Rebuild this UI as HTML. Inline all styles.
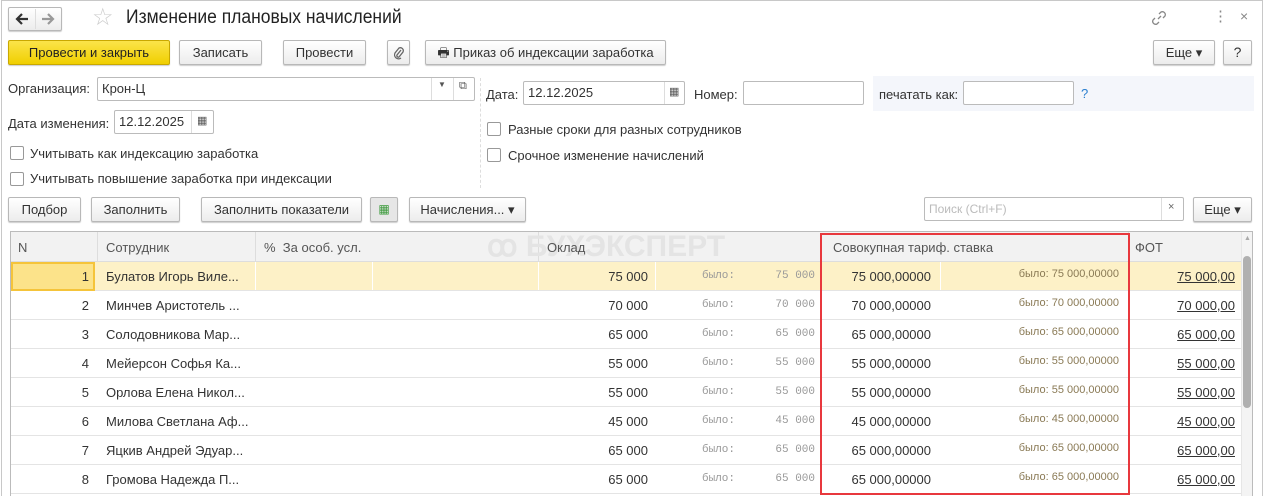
<!DOCTYPE html>
<html><head><meta charset="utf-8"><style>
*{box-sizing:border-box;margin:0;padding:0}
body{width:1266px;height:496px;background:#fff;font-family:"Liberation Sans",Arial,sans-serif;font-size:13px;color:#333;position:relative;overflow:hidden}
.a{position:absolute;white-space:nowrap}
.btn{position:absolute;height:25px;border:1px solid #b8b8b8;border-radius:2px;background:linear-gradient(#fff,#ececec);box-shadow:0 1px 1px rgba(0,0,0,.2);text-align:center;line-height:23px;color:#333;font-size:13px}
.inp{position:absolute;height:24px;border:1px solid #bbb;border-radius:2px;background:#fff;line-height:22px;padding-left:4px;color:#333}
.cb{position:absolute;width:14px;height:14px;border:1px solid #999;border-radius:2px;background:#fff}
.t{position:absolute;left:10px;top:231px;width:1243px;height:265px;border:1px solid #bbb;border-bottom:none;overflow:hidden}
.row{position:absolute;left:0;width:1230px;height:29px;border-bottom:1px solid #e4e4e4}
.c{position:absolute;top:0;height:28px;line-height:29px;white-space:nowrap}
.r{text-align:right}
.was{color:#999;font-size:11px}
.was2{color:#8a7a55;font-size:11px}
</style></head><body>
<div class="a" style="left:1px;top:0;width:1262px;height:496px;border-left:1px solid #c8c8c8;border-right:1px solid #c8c8c8;border-top:1px solid #c8c8c8"></div>
<!-- nav -->
<div class="btn" style="left:8px;top:7px;width:54px;height:24px"></div>
<div class="a" style="left:35px;top:9px;width:1px;height:20px;background:#ddd"></div>
<svg class="a" style="left:14px;top:11px" width="16" height="16" viewBox="0 0 16 16"><path d="M14 8H3M8 3L3 8l5 5" stroke="#333" stroke-width="2.2" fill="none"/></svg>
<svg class="a" style="left:40px;top:11px" width="16" height="16" viewBox="0 0 16 16"><path d="M2 8h11M8 3l5 5-5 5" stroke="#999" stroke-width="2.2" fill="none"/></svg>
<div class="a" style="left:92px;top:3px;font-size:24px;color:#ccc">☆</div>
<div class="a" style="left:126px;top:7px;font-size:19px;color:#222;transform:scaleX(.92);transform-origin:left">Изменение плановых начислений</div>
<svg class="a" style="left:1150px;top:9px" width="18" height="18" viewBox="0 0 18 18"><path d="M8 10l3-3M9 5l2-2a3 3 0 014 4l-2 2M9 13l-2 2a3 3 0 01-4-4l2-2" stroke="#888" stroke-width="1.3" fill="none"/></svg>
<div class="a" style="left:1213px;top:7px;font-size:15px;color:#888">⋮</div>
<div class="a" style="left:1240px;top:8px;font-size:14px;color:#888">×</div>
<!-- toolbar -->
<div class="btn" style="left:8px;top:40px;width:162px;background:linear-gradient(#fbe44a,#f0cf00);border-color:#c9a800;color:#222">Провести и закрыть</div>
<div class="btn" style="left:179px;top:40px;width:83px">Записать</div>
<div class="btn" style="left:283px;top:40px;width:83px">Провести</div>
<div class="btn" style="left:387px;top:40px;width:23px">
<svg width="12" height="14" viewBox="0 0 12 14" style="margin-top:5px"><path d="M8 4L4 9a1.5 1.5 0 002 2l4-5a3 3 0 00-4-4L2 7a4 4 0 006 5" stroke="#666" stroke-width="1.3" fill="none"/></svg></div>
<div class="btn" style="left:425px;top:40px;width:241px">🖶︎ Приказ об индексации заработка</div>
<div class="btn" style="left:1153px;top:40px;width:62px">Еще ▾</div>
<div class="btn" style="left:1223px;top:40px;width:29px;font-size:14px">?</div>
<!-- form left -->
<div class="a" style="left:8px;top:81px">Организация:</div>
<div class="inp" style="left:97px;top:77px;width:378px">Крон-Ц</div>
<div class="a" style="left:431px;top:78px;width:1px;height:22px;background:#ddd"></div>
<div class="a" style="left:438px;top:80px;font-size:8px;color:#555">▼</div>
<div class="a" style="left:453px;top:78px;width:1px;height:22px;background:#ddd"></div>
<div class="a" style="left:459px;top:80px;font-size:11px;color:#555">⧉</div>
<div class="a" style="left:8px;top:116px">Дата изменения:</div>
<div class="inp" style="left:114px;top:110px;width:100px">12.12.2025</div>
<div class="a" style="left:191px;top:111px;width:1px;height:22px;background:#ddd"></div>
<div class="a" style="left:197px;top:114px;font-size:11px;color:#555">▦</div>
<div class="cb" style="left:10px;top:146px"></div><div class="a" style="left:30px;top:146px">Учитывать как индексацию заработка</div>
<div class="cb" style="left:10px;top:172px"></div><div class="a" style="left:30px;top:171px">Учитывать повышение заработка при индексации</div>
<div class="a" style="left:480px;top:78px;height:110px;border-left:1px dashed #ddd"></div>
<!-- form right -->
<div class="a" style="left:486px;top:87px">Дата:</div>
<div class="inp" style="left:523px;top:81px;width:162px">12.12.2025</div>
<div class="a" style="left:664px;top:82px;width:1px;height:22px;background:#ddd"></div>
<div class="a" style="left:669px;top:85px;font-size:11px;color:#555">▦</div>
<div class="a" style="left:694px;top:87px">Номер:</div>
<div class="inp" style="left:743px;top:81px;width:121px"></div>
<div class="a" style="left:873px;top:76px;width:381px;height:35px;background:#f4f6fb"></div>
<div class="a" style="left:879px;top:87px">печатать как:</div>
<div class="inp" style="left:963px;top:81px;width:111px"></div>
<div class="a" style="left:1081px;top:86px;color:#2a7fd0">?</div>
<div class="cb" style="left:487px;top:122px"></div><div class="a" style="left:508px;top:122px">Разные сроки для разных сотрудников</div>
<div class="cb" style="left:487px;top:148px"></div><div class="a" style="left:508px;top:148px">Срочное изменение начислений</div>
<!-- table toolbar -->
<div class="btn" style="left:8px;top:197px;width:73px">Подбор</div>
<div class="btn" style="left:91px;top:197px;width:89px">Заполнить</div>
<div class="btn" style="left:201px;top:197px;width:161px">Заполнить показатели</div>
<div class="btn" style="left:370px;top:197px;width:28px;background:#e6e6e6;color:#3a9a3a;font-size:12px">▦</div>
<div class="btn" style="left:409px;top:197px;width:117px">Начисления... ▾</div>
<div class="inp" style="left:924px;top:197px;width:260px;color:#bbb;font-size:12px">Поиск (Ctrl+F)</div>
<div class="a" style="left:1161px;top:198px;width:1px;height:22px;background:#ddd"></div>
<div class="a" style="left:1168px;top:201px;font-size:11px;color:#666">×</div>
<div class="btn" style="left:1193px;top:197px;width:59px">Еще ▾</div>
<!-- table -->
<div class="t">
 <div class="a" style="left:0;top:0;width:1230px;height:30px;background:#f2f2f2;border-bottom:1px solid #ddd"></div>
 <div class="a" style="left:86px;top:0;width:1px;height:30px;background:#ddd"></div>
 <div class="a" style="left:244px;top:0;width:1px;height:30px;background:#ddd"></div>
 <div class="a" style="left:527px;top:0;width:1px;height:30px;background:#ddd"></div>
 <div class="a" style="left:1117px;top:0;width:1px;height:30px;background:#ddd"></div>
 <div class="a" style="left:476px;top:0;font-size:30px;font-weight:bold;color:#e4e4e4;line-height:30px">ꝏ БУХЭКСПЕРТ</div>
 <div class="a" style="left:7px;top:8px;color:#555">N</div>
 <div class="a" style="left:95px;top:8px;color:#555">Сотрудник</div>
 <div class="a" style="left:253px;top:8px;color:#555">%&nbsp; За особ. усл.</div>
 <div class="a" style="left:536px;top:8px;color:#555">Оклад</div>
 <div class="a" style="left:822px;top:8px;color:#555">Совокупная тариф. ставка</div>
 <div class="a" style="left:1124px;top:8px;color:#555">ФОТ</div>
 <div class="row" style="top:30px;background:#fdf1c7"><div class="c" style="left:0;width:84px;background:#fce38a;border:2px solid #f5c43a;height:29px"></div><div class="c" style="left:244px;width:1px;background:#fff"></div><div class="c" style="left:361px;width:1px;background:#fff"></div><div class="c" style="left:527px;width:1px;background:#fff"></div><div class="c" style="left:644px;width:1px;background:#fff"></div><div class="c" style="left:929px;width:1px;background:#fff"></div><div class="c" style="left:1117px;width:1px;background:#fff"></div></div>
 <div class="row" style="top:59px"></div><div class="row" style="top:88px"></div><div class="row" style="top:117px"></div><div class="row" style="top:146px"></div><div class="row" style="top:175px"></div><div class="row" style="top:204px"></div><div class="row" style="top:233px"></div>
 <div id="rows"></div>
 <div class="a" style="left:1230px;top:0;width:12px;height:265px;background:#f4f4f4;border-left:1px solid #e6e6e6"></div>
 <div class="a" style="left:1233px;top:3px;font-size:7px;color:#aaa">▲</div>
 <div class="a" style="left:1232px;top:24px;width:8px;height:152px;background:#b0b0b0;border-radius:4px"></div>
 <div class="a" style="left:809px;top:1px;width:310px;height:262px;border:2px solid #e8383d"></div>
</div>
<script>
var d=[["1","Булатов Игорь Виле...","75 000"],["2","Минчев Аристотель ...","70 000"],["3","Солодовникова Мар...","65 000"],["4","Мейерсон Софья Ка...","55 000"],["5","Орлова Елена Никол...","55 000"],["6","Милова Светлана Аф...","45 000"],["7","Яцкив Андрей Эдуар...","65 000"],["8","Громова Надежда П...","65 000"]];
var h="";d.forEach(function(r,i){var t=30+i*29;
h+='<div class="row" style="top:'+t+'px;border:none;background:none">'+
'<div class="c r" style="left:0;width:78px">'+r[0]+'</div>'+
'<div class="c" style="left:95px">'+r[1]+'</div>'+
'<div class="c r" style="left:530px;width:107px">'+r[2]+'</div>'+
'<div class="c was" style="left:691px;font-family:Liberation Mono,monospace;font-size:11px">было:</div>'+
'<div class="c r was" style="left:740px;width:64px;font-family:Liberation Mono,monospace;font-size:11px">'+r[2].replace(" ","&nbsp;")+'</div>'+
'<div class="c r" style="left:820px;width:100px">'+r[2]+',00000</div>'+
'<div class="c r was2" style="left:940px;width:168px;top:-2px">было: '+r[2]+',00000</div>'+
'<div class="c r" style="left:1120px;width:104px;text-decoration:underline">'+r[2]+',00</div></div>';});
document.getElementById("rows").outerHTML=h;
</script>
</body></html>
